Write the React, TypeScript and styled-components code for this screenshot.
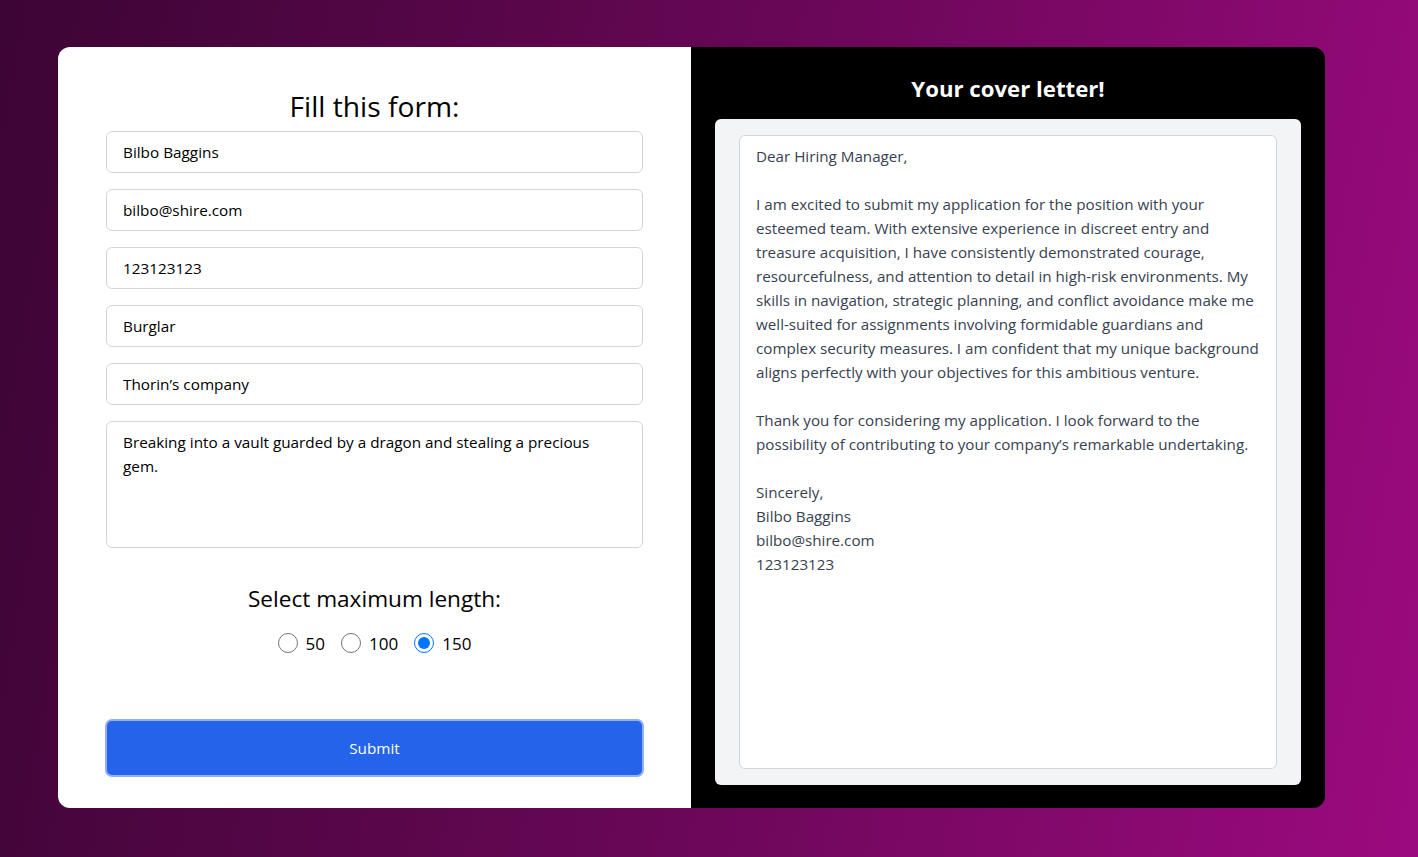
import React from "react";
import styled, { createGlobalStyle } from "styled-components";

const GlobalStyle = createGlobalStyle`
  html, body {
    margin: 0;
    padding: 0;
  }
  body {
    font-family: "Open Sans", "Noto Sans", Arial, sans-serif;
    background: linear-gradient(100deg, #3c0534 0%, #680756 50%, #9c0a7f 100%);
    min-height: 857px;
  }
  * { box-sizing: border-box; }
`;

const Page = styled.div`
  min-height: 857px;
  padding: 47px 93px 49px 58px;
  display: flex;
  align-items: flex-start;
`;

const Card = styled.div`
  display: grid;
  grid-template-columns: 633px 634px;
  height: 761px;
  border-radius: 12px;
  overflow: hidden;
`;

const FormPanel = styled.form`
  background: #ffffff;
  padding: 41px 48px 31px 48px;
  display: flex;
  flex-direction: column;
`;

const FormTitle = styled.h1`
  margin: 0 0 7px 0;
  font-size: 28.2px;
  line-height: 36px;
  font-weight: 400;
  text-align: center;
  color: #000;
`;

const Fields = styled.div`
  display: flex;
  flex-direction: column;
  gap: 16px;
`;

const TextInput = styled.input`
  height: 42px;
  width: 100%;
  border: 1px solid #d1d5db;
  border-radius: 6px;
  padding: 0 16px;
  font-family: inherit;
  font-size: 15.3px;
  color: #000;
  background: #fff;
  outline: none;
`;

const TextArea = styled.textarea`
  height: 127px;
  width: 100%;
  border: 1px solid #d1d5db;
  border-radius: 6px;
  padding: 8px 28px 8px 16px;
  font-family: inherit;
  font-size: 15.3px;
  line-height: 24px;
  color: #000;
  resize: none;
  outline: none;
`;

const LengthTitle = styled.h2`
  margin: 35px 0 16px 0;
  font-size: 22.6px;
  line-height: 32px;
  font-weight: 400;
  text-align: center;
  color: #000;
`;

const RadioRow = styled.div`
  display: flex;
  justify-content: center;
  align-items: center;
  gap: 16px;
  height: 24px;
`;

const RadioLabel = styled.label`
  display: flex;
  align-items: center;
  gap: 8px;
  font-size: 17px;
  color: #000;
`;

const Radio = styled.input`
  width: 20px;
  height: 20px;
  margin: 0;
  accent-color: #0075ff;
`;

const SubmitButton = styled.button`
  margin-top: auto;
  height: 58px;
  width: calc(100% + 2px);
  margin-left: -1px;
  border: 2px solid #8fb0f5;
  border-radius: 7px;
  background: #2563eb;
  color: #fff;
  font-family: inherit;
  font-size: 15.3px;
`;

const LetterPanel = styled.section`
  background: #000;
  padding: 26px 24px 23px 24px;
  display: flex;
  flex-direction: column;
`;

const LetterTitle = styled.h2`
  margin: 0 0 14px 0;
  font-size: 22.2px;
  line-height: 32px;
  font-weight: 700;
  text-align: center;
  color: #fff;
`;

const LetterTray = styled.div`
  flex: 1;
  background: #f3f4f6;
  border-radius: 6px;
  padding: 16px 24px;
  display: flex;
`;

const LetterSheet = styled.div`
  flex: 1;
  background: #fff;
  border: 1px solid #d1d5db;
  border-radius: 6px;
  padding: 8px 16px;
  font-size: 15.2px;
  line-height: 24px;
  color: #374151;
  white-space: pre;
`;

const letter = [
  "Dear Hiring Manager,",
  "",
  "I am excited to submit my application for the position with your",
  "esteemed team. With extensive experience in discreet entry and",
  "treasure acquisition, I have consistently demonstrated courage,",
  "resourcefulness, and attention to detail in high-risk environments. My",
  "skills in navigation, strategic planning, and conflict avoidance make me",
  "well-suited for assignments involving formidable guardians and",
  "complex security measures. I am confident that my unique background",
  "aligns perfectly with your objectives for this ambitious venture.",
  "",
  "Thank you for considering my application. I look forward to the",
  "possibility of contributing to your company\u2019s remarkable undertaking.",
  "",
  "Sincerely,",
  "Bilbo Baggins",
  "bilbo@shire.com",
  "123123123",
].join("\n");

const fields = [
  "Bilbo Baggins",
  "bilbo@shire.com",
  "123123123",
  "Burglar",
  "Thorin\u2019s company",
];

export default function App() {
  return (
    <>
      <GlobalStyle />
      <Page>
        <Card>
          <FormPanel onSubmit={(e) => e.preventDefault()}>
            <FormTitle>Fill this form:</FormTitle>
            <Fields>
              {fields.map((v) => (
                <TextInput key={v} defaultValue={v} />
              ))}
              <TextArea defaultValue="Breaking into a vault guarded by a dragon and stealing a precious gem." />
            </Fields>
            <LengthTitle>Select maximum length:</LengthTitle>
            <RadioRow>
              {["50", "100", "150"].map((n) => (
                <RadioLabel key={n}>
                  <Radio type="radio" name="len" value={n} defaultChecked={n === "150"} />
                  {n}
                </RadioLabel>
              ))}
            </RadioRow>
            <SubmitButton type="submit">Submit</SubmitButton>
          </FormPanel>
          <LetterPanel>
            <LetterTitle>Your cover letter!</LetterTitle>
            <LetterTray>
              <LetterSheet>{letter}</LetterSheet>
            </LetterTray>
          </LetterPanel>
        </Card>
      </Page>
    </>
  );
}
